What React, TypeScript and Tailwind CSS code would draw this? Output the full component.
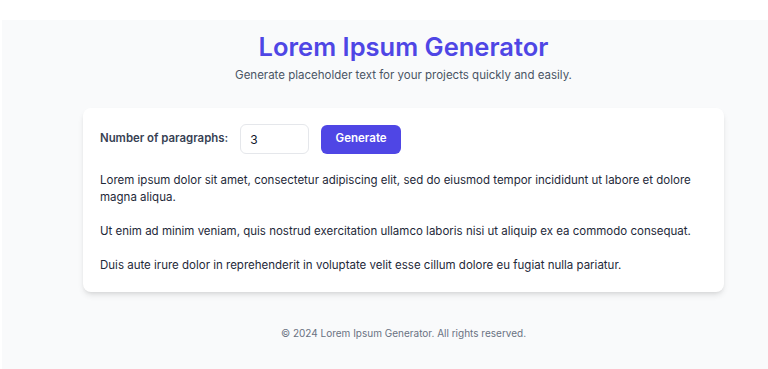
import React, { useState } from 'react';

const SOURCE = [
  'Lorem ipsum dolor sit amet, consectetur adipiscing elit, sed do eiusmod tempor incididunt ut labore et dolore magna aliqua.',
  'Ut enim ad minim veniam, quis nostrud exercitation ullamco laboris nisi ut aliquip ex ea commodo consequat.',
  'Duis aute irure dolor in reprehenderit in voluptate velit esse cillum dolore eu fugiat nulla pariatur.',
  'Excepteur sint occaecat cupidatat non proident, sunt in culpa qui officia deserunt mollit anim id est laborum.',
];

function makeParagraphs(count: number) {
  const out: string[] = [];
  for (let i = 0; i < count; i++) out.push(SOURCE[i % SOURCE.length]);
  return out;
}

function App() {
  const [count, setCount] = useState(3);
  const [paragraphs, setParagraphs] = useState<string[]>(makeParagraphs(3));

  return (
    <div className="bg-white pt-5 font-['Inter',sans-serif]">
      <div className="ml-[2px] pl-[37px] min-h-[349px] bg-gray-50 flex flex-col items-center">
        <header className="pt-[12px] text-center">
          <h1 className="text-[25.5px] leading-[30px] font-semibold text-[#4f46e5]">Lorem Ipsum Generator</h1>
          <p className="mt-[4px] text-[11.5px] leading-[18px] text-gray-600">
            Generate placeholder text for your projects quickly and easily.
          </p>
        </header>

        <main className="mt-[24px] w-[641px] bg-white rounded-lg shadow-md px-[17px] pt-[16px] pb-[18px]">
          <div className="flex items-center">
            <label htmlFor="count" className="text-[11.4px] font-semibold text-gray-700">
              Number of paragraphs:
            </label>
            <input
              id="count"
              type="number"
              min={1}
              value={count}
              onChange={(e) => setCount(Number(e.target.value))}
              className="ml-[12px] w-[69px] h-[30px] px-[9px] text-[12px] text-gray-900 border border-gray-200 rounded-md outline-none [appearance:textfield] [&::-webkit-inner-spin-button]:appearance-none"
            />
            <button
              onClick={() => setParagraphs(makeParagraphs(count))}
              className="ml-[12px] w-[80px] h-[29px] bg-[#4f46e5] text-white text-[11.5px] font-semibold rounded-md"
            >
              Generate
            </button>
          </div>

          <div className="mt-[18px] flex flex-col gap-[17px]">
            {paragraphs.map((text, i) => (
              <p key={i} className="text-[11.5px] leading-[17px] text-gray-800">
                {text}
              </p>
            ))}
          </div>
        </main>

        <footer className="mt-[34px] text-[10px] leading-[15px] text-gray-500">
          © 2024 Lorem Ipsum Generator. All rights reserved.
        </footer>
      </div>
    </div>
  );
}

export default App;
